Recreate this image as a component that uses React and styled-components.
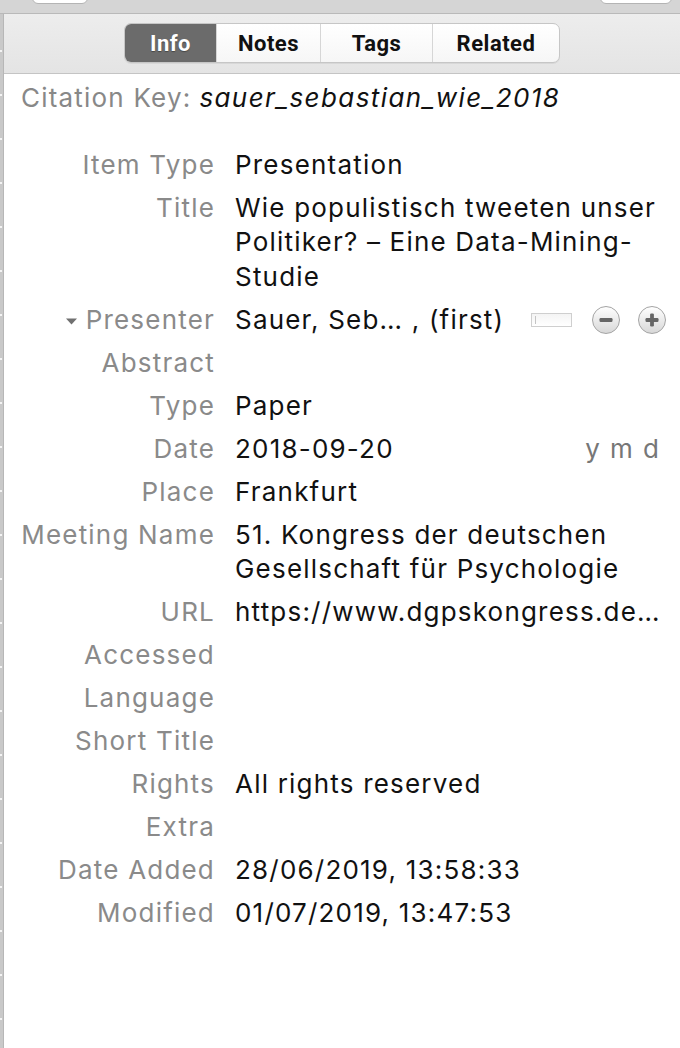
import React from "react";
import styled, { createGlobalStyle } from "styled-components";

const GlobalStyle = createGlobalStyle`
  html, body {
    margin: 0;
    padding: 0;
    background: #ffffff;
  }
  body {
    font-family: "Inter", "Roboto", "Liberation Sans", sans-serif;
    overflow: hidden;
  }
`;

const fields = [
  { label: "Item Type", value: ["Presentation"] },
  {
    label: "Title",
    value: ["Wie populistisch tweeten unser", "Politiker? – Eine Data-Mining-", "Studie"]
  },
  { label: "Presenter", creator: true },
  { label: "Abstract" },
  { label: "Type", value: ["Paper"] },
  { label: "Date", value: ["2018-09-20"], date: true },
  { label: "Place", value: ["Frankfurt"] },
  {
    label: "Meeting Name",
    value: ["51. Kongress der deutschen", "Gesellschaft für Psychologie"]
  },
  { label: "URL", value: ["https://www.dgpskongress.de/frontend/index.php"], clip: true },
  { label: "Accessed" },
  { label: "Language" },
  { label: "Short Title" },
  { label: "Rights", value: ["All rights reserved"] },
  { label: "Extra" },
  { label: "Date Added", value: ["28/06/2019, 13:58:33"] },
  { label: "Modified", value: ["01/07/2019, 13:47:53"] }
];

const tabs = ["Info", "Notes", "Tags", "Related"];
const tabWidths = [91, 104, 112, 127];

const RoundButton = ({ plus }) => (
  <SRound>
    <svg width="16" height="16" viewBox="0 0 16 16">
      <rect x="1.5" y="6.1" width="13" height="3.8" rx="1.2" fill="#666666" />
      {plus && <rect x="6.1" y="1.5" width="3.8" height="13" rx="1.2" fill="#666666" />}
    </svg>
  </SRound>
);

const Twisty = () => (
  <STwisty width="11" height="7" viewBox="0 0 11 7">
    <path d="M0 0.5 L11 0.5 L5.5 6.5 Z" fill="#707070" />
  </STwisty>
);

const App = () => {
  return (
    <SApp>
      <GlobalStyle />
      <STopStrip>
        <STopButton width={56} />
        <STopButton width={72} />
      </STopStrip>
      <SBody>
        <SSidebar />
        <SPane>
          <STabBar>
            <SSegmented>
              {tabs.map((t, i) => (
                <STab key={t} active={i === 0} w={tabWidths[i]}>
                  {t}
                </STab>
              ))}
            </SSegmented>
          </STabBar>
          <SContent>
            <SCitation>
              <span className="label">Citation Key:</span>
              <span className="key">sauer_sebastian_wie_2018</span>
            </SCitation>
            <SGrid>
              {fields.map(f => (
                <SRow key={f.label}>
                  <SLabel>
                    {f.creator && <Twisty />}
                    {f.label}
                  </SLabel>
                  {f.creator ? (
                    <SCreator>
                      <span>Sauer, Seb… , (first)</span>
                      <SSwitchBox />
                      <RoundButton />
                      <RoundButton plus />
                    </SCreator>
                  ) : f.date ? (
                    <SDateValue>
                      <span>{f.value[0]}</span>
                      <SYmd>y m d</SYmd>
                    </SDateValue>
                  ) : (
                    <SValue clip={f.clip}>
                      {(f.value || []).map(line => (
                        <div key={line}>{line}</div>
                      ))}
                    </SValue>
                  )}
                </SRow>
              ))}
            </SGrid>
          </SContent>
        </SPane>
      </SBody>
    </SApp>
  );
};

const SApp = styled.div`
  display: flex;
  flex-direction: column;
  width: 680px;
  height: 1048px;
  overflow: hidden;
`;

const STopStrip = styled.div`
  display: flex;
  justify-content: space-between;
  align-items: flex-end;
  height: 13px;
  padding: 0 8px 0 32px;
  background: #d5d5d5;
  border-bottom: 1px solid #b9b9b9;
`;

const STopButton = styled.div`
  flex: none;
  width: ${({ width }) => width}px;
  height: 30px;
  margin-bottom: 9px;
  background: #ffffff;
  border: 1px solid #b4b4b4;
  border-radius: 6px;
  box-sizing: border-box;
`;

const SBody = styled.div`
  display: flex;
  flex: 1;
  min-height: 0;
`;

const SSidebar = styled.div`
  flex: none;
  width: 3px;
  border-right: 1px solid #b7b7b7;
  background-color: #c9c9c9;
  background-image: linear-gradient(
    to bottom,
    transparent 0px,
    transparent 42px,
    #f4f4f4 42px,
    #f4f4f4 44px
  );
  background-size: 2px 44px;
  background-repeat: repeat-y;
  background-position: 0 -6px;
`;

const SPane = styled.div`
  flex: 1;
  display: flex;
  flex-direction: column;
  min-width: 0;
`;

const STabBar = styled.div`
  display: flex;
  justify-content: center;
  align-items: flex-start;
  height: 60px;
  padding-top: 9px;
  box-sizing: border-box;
  background: linear-gradient(to bottom, #ededed, #e4e4e4);
  border-bottom: 1px solid #c4c4c4;
`;

const SSegmented = styled.div`
  display: flex;
  height: 40px;
  border: 1px solid #c6c6c6;
  border-radius: 7px;
  overflow: hidden;
  background: linear-gradient(to bottom, #ffffff, #f6f6f6);
  box-shadow: 0 1px 0 rgba(0, 0, 0, 0.06);
  box-sizing: border-box;
`;

const STab = styled.div`
  display: flex;
  align-items: center;
  justify-content: center;
  width: ${({ w }) => w}px;
  box-sizing: border-box;
  font-family: "Roboto", "Liberation Sans", sans-serif;
  font-weight: 700;
  font-size: 22px;
  letter-spacing: 0.5px;
  color: ${({ active }) => (active ? "#ffffff" : "#111111")};
  background: ${({ active }) => (active ? "#6b6b6b" : "transparent")};
  text-shadow: ${({ active }) => (active ? "0 1px 1px rgba(0,0,0,0.35)" : "none")};
  & + & {
    border-left: 1px solid #d6d6d6;
  }
`;

const SContent = styled.div`
  flex: 1;
  background: #ffffff;
  padding: 7px 16px 0 0;
  font-size: 26px;
  letter-spacing: 1.2px;
`;

const SCitation = styled.div`
  padding-left: 17px;
  line-height: 34px;
  white-space: nowrap;

  & > .label {
    color: #888888;
    margin-right: 8px;
  }
  & > .key {
    color: #111111;
    font-style: italic;
    letter-spacing: 1.4px;
  }
`;

const SGrid = styled.div`
  display: grid;
  grid-template-columns: 211px 1fr;
  column-gap: 20px;
  margin-top: 28.5px;
`;

const SRow = styled.div`
  display: contents;
  line-height: 34.5px;
`;

const SLabel = styled.div`
  padding: 4px 0 4.5px;
  text-align: right;
  color: #8a8a8a;
  white-space: nowrap;
`;

const STwisty = styled.svg`
  margin-right: 9px;
  vertical-align: 4px;
`;

const SValue = styled.div`
  padding: 4px 0 4.5px;
  color: #111111;
  min-width: 0;

  & > div {
    white-space: nowrap;
    overflow: hidden;
    text-overflow: ${({ clip }) => (clip ? "ellipsis" : "clip")};
  }
`;

const SCreator = styled.div`
  display: flex;
  align-items: center;
  padding: 4px 0 4.5px;
  color: #111111;
  white-space: nowrap;
`;

const SSwitchBox = styled.div`
  flex: none;
  width: 41px;
  height: 14px;
  margin-left: 27px;
  margin-right: 20px;
  border: 1px solid #cfcfcf;
  box-sizing: border-box;
  background: linear-gradient(to bottom, #f4f4f4, #ffffff);
  position: relative;

  &::before {
    content: "";
    position: absolute;
    left: 3px;
    top: 2px;
    width: 1px;
    height: 8px;
    background: #c4c4c4;
  }
`;

const SRound = styled.div`
  flex: none;
  display: flex;
  align-items: center;
  justify-content: center;
  width: 28px;
  height: 28px;
  border-radius: 50%;
  box-sizing: border-box;
  border: 1px solid #a4a4a4;
  background: linear-gradient(to bottom, #ffffff, #d8d8d8);
  & + & {
    margin-left: 18px;
  }
`;

const SDateValue = styled.div`
  display: flex;
  justify-content: space-between;
  padding: 4px 6px 4.5px 0;
  color: #111111;
`;

const SYmd = styled.span`
  color: #777777;
  letter-spacing: 1.4px;
`;

export default App;
